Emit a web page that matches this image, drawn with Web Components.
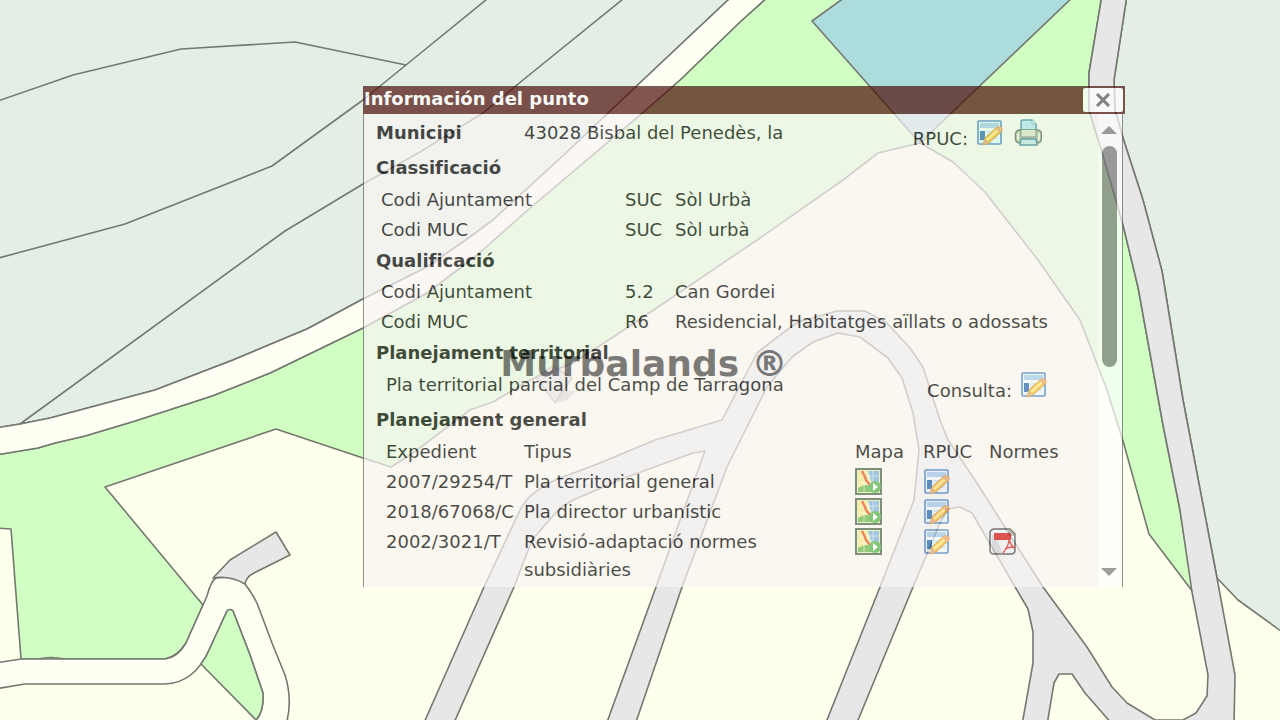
<!DOCTYPE html>
<html lang="ca">
<head>
<meta charset="utf-8">
<meta name="viewport" content="width=device-width, initial-scale=1">
<title>Información del punto</title>
<style>
  html, body { margin: 0; min-height: 100%; }
  body { font: 18px/28px "DejaVu Sans", Verdana, sans-serif; color: #000; background: #feffec; }
</style>
</head>
<body>
<map-page>
  <parcel-map slot="map"></parcel-map>
  <info-window heading="Información del punto">
    <place-row label="Municipi" value="43028 Bisbal del Penedès, la"></place-row>
    <section-title>Classificació</section-title>
    <code-row label="Codi Ajuntament" code="SUC" value="Sòl Urbà"></code-row>
    <code-row label="Codi MUC" code="SUC" value="Sòl urbà"></code-row>
    <section-title compact>Qualificació</section-title>
    <code-row label="Codi Ajuntament" code="5.2" value="Can Gordei"></code-row>
    <code-row label="Codi MUC" code="R6" value="Residencial, Habitatges aïllats o adossats"></code-row>
    <section-title compact>Planejament territorial</section-title>
    <plan-row value="Pla territorial parcial del Camp de Tarragona"></plan-row>
    <section-title>Planejament general</section-title>
    <plan-table></plan-table>
  </info-window>
  <water-mark slot="mark">Murbalands ®</water-mark>
</map-page>

<script>
function define(name, render) {
  customElements.define(name, class extends HTMLElement {
    connectedCallback() {
      if (this.shadowRoot) return;
      this.attachShadow({ mode: "open" }).innerHTML = render(this);
    }
  });
}

define("map-page", () => `
  <style>
    :host { display: grid; min-height: 100vh; overflow: hidden; }
    .map, .over, .mark { grid-area: 1 / 1; min-width: 0; }
    .map { display: grid; height: 100vh; }
    .over { display: grid; grid-template-columns: 363fr 762fr 155fr; align-items: start; padding-top: 86px; z-index: 1; }
    .over slot { display: block; grid-column: 2; min-width: 0; }
    .mark { display: grid; place-items: center; height: 100vh; z-index: 2; pointer-events: none; }
  </style>
  <div class="map"><slot name="map"></slot></div>
  <main class="over"><slot></slot></main>
  <div class="mark"><slot name="mark"></slot></div>`);

define("water-mark", () => `
  <style>:host { display: block; font-size: 36px; line-height: 40px; font-weight: bold; opacity: .5; white-space: nowrap; padding: 8px 0 0 8px; }</style>
  <slot></slot>`);

define("parcel-map", () => `
  <style>
    :host { display: block; width: 100%; height: 100%; min-height: 0; overflow: hidden; }
    svg { display: block; width: 100%; height: 100%; }
    .w { fill: #e3eee5; } .g { fill: #d1ffc3; } .c { fill: #feffec; } .r { fill: #fffff4; } .s { fill: #e7e7e7; } .p { fill: #acdcdc; }
  </style>
  <svg viewBox="0 0 1280 720" preserveAspectRatio="xMidYMid slice" stroke="#747870" stroke-width="1.6" stroke-linejoin="round" aria-hidden="true">
    <rect class="c" x="-5" y="-5" width="1290" height="730"/>
    <path class="g" d="M-5 455 38 448 55 443 85 436 135 421 212 396 270 373 363 328 427 293 477 255 530 208 640 115 680 80 740 22 770-5H1102L1089 73V110L1102 152 1123 225 1138 287 1163 425 1180 510 1193 592 1149 534 1123 441 1107 390 1080 320 1038 260 985 192 953 162 920 143 878 153 843 180 760 238 627 328 593 350 573 363 530 380 493 402 470 410 413 453 391 467 363 458 276 429 105 487 203 605 186 643Q177 657 165 659H65Q50 656 38 659H21L11 529-5 528Z"/>
    <path class="w" d="M-5-5H735L728 0 643 80 567 152 493 220 470 237 427 267 363 299 307 329 233 360 155 390 50 418 20 424-5 428Z"/>
    <path class="r" d="M-5 428 20 424 50 418 155 390 233 360 307 329 363 299 427 267 470 237 493 220 567 152 643 80 728 0 735-5H770L740 22 680 80 640 115 530 208 477 255 427 293 363 328 270 373 212 396 135 421 85 436 55 443 38 448-5 455Z"/>
    <path fill="none" d="M-5 102 73 75 181 49 295 42 406 65M492-5 406 65 363 100 272 166 125 224-5 259M628-5 523 80 483 113 420 152 363 184 285 231 20 424"/>
    <path class="p" d="M848-5 812 21 920 143 1075-5Z"/>
    <path class="w" d="M1127-5 1114 80 1115 110 1123 138 1143 200 1162 271 1183 400 1217 578 1238 600 1285 634V-5Z"/>
    <path class="r" d="M-5 663 21 659H165Q178 657 186 643L203 605 207 596Q211 581 216 578L230 577Q240 579 245 584 256 598 260 611L272 643 285 675Q293 700 286 725H252L256 720Q264 712 263 693L250 655 233 611Q230 608 227 611L210 648Q195 683 165 684H25L-5 689Z"/>
    <path class="g" d="M201 664 256 720Q264 712 263 693L250 655 233 611Q230 608 227 611L210 648Q207 656 201 664Z"/>
    <path class="s" d="M213 578 230 560 276 532 290 555 254 573Q246 577 245 584 230 575 213 578Z"/>
    <path class="s" d="M423 725 484 587 520 510Q531 489 563 477L600 463 655 440 722 420 757 353 780 335 798 322 837 311H865L887 323 910 348 923 367 940 420 948 440 975 480 1043 587 1087 647 1112 687 1127 703 1155 720H1183L1196 713 1207 696 1208 675 1192 592 1180 510 1163 425 1138 287 1123 225 1102 152 1089 110V73L1102-5H1127L1114 80 1115 110 1123 138 1143 200 1162 271 1183 400 1217 578 1235 675 1234 725H1113L1085 693 1072 674H1059L1054 683 1047 725H1022L1033 663V632L1028 609 972 513 960 507 948 509 940 523 913 587 856 725H825L880 587 914 500 919 450 913 413 902 378 888 358 860 337 838 333 813 342 792 357 767 387 727 467 682 587 635 725H606L656 587 705 451 693 453 627 477 573 500 560 508 532 540 514 587 453 725Z"/>
    <path d="M536 377 553 366 572 378 555 403Z" fill="#ccc" opacity=".7" stroke="#777"/>
    <path d="M555 403 561 390 576 391 566 401Z" fill="#999" stroke="none" opacity=".6"/>
  </svg>`);

define("info-window", el => `
  <style>
    :host { display: block; opacity: .7; }
    header { display: flex; justify-content: space-between; align-items: flex-start; height: 28px; padding: 0 2px 0 1px; background: #4e0f09; box-sizing: border-box; border-top: 1px solid #3f1616; }
    h2 { margin: 0; font-size: 18px; line-height: 24px; color: #fff; white-space: nowrap; }
    button { width: 40px; height: 24px; margin: 1px 0 0; padding: 0; border: 0; border-radius: 2px; background: #fff; display: grid; place-items: center; }
    .body { display: flex; margin-right: 2px; border: 1px solid #626262; border-width: 0 1px; background: #fff; }
    .content { flex: 1; min-width: 0; background: #f9f4f4; padding: 1px 0 2px; }
  </style>
  <header><h2>${el.getAttribute("heading")}</h2>
    <button type="button" aria-label="Cerrar"><svg width="16" height="14" viewBox="0 0 16 14"><path d="M2 1 14 13M14 1 2 13" stroke="#555" stroke-width="3"/></svg></button>
  </header>
  <div class="body"><div class="content"><slot></slot></div><scroll-rail></scroll-rail></div>`);

define("scroll-rail", () => `
  <style>
    :host { display: flex; flex-direction: column; align-items: center; width: 24px; box-sizing: border-box; padding: 12px 2px 11px 0; }
    i { border: 8px solid transparent; border-top: 0; border-bottom: 8px solid #777; }
    i:last-child { border-top: 8px solid #777; border-bottom: 0; margin-top: auto; }
    b { width: 15px; height: 49%; margin-top: 12px; border-radius: 8px; background: #777; }
  </style><i></i><b></b><i></i>`);

define("section-title", () => `
  <style>
    :host { display: block; padding-left: 12px; }
    h3 { margin: 0; font-size: 18px; line-height: 34px; color: #000; }
    :host([compact]) h3 { line-height: 32px; }
  </style><h3><slot></slot></h3>`);

define("place-row", el => `
  <style>
    :host { display: flex; height: 36px; line-height: 36px; padding: 0 56px 0 12px; white-space: nowrap; }
    b { flex: 0 0 148px; }
    .tools { display: flex; margin-left: auto; }
    .tools span { line-height: 48px; margin-right: 8px; }
    a { display: block; height: 28px; padding-top: 4px; }
    a + a { margin-left: 10px; }
  </style>
  <b>${el.getAttribute("label")}</b><span>${el.getAttribute("value")}</span>
  <div class="tools"><span>RPUC:</span><a href="#rpuc" aria-label="RPUC"><tool-icon name="form"></tool-icon></a><a href="#print" aria-label="Imprimir"><tool-icon name="print"></tool-icon></a></div>`);

define("code-row", el => `
  <style>
    :host { display: grid; grid-template-columns: 244px 50px 1fr; padding-left: 17px; line-height: 30px; white-space: nowrap; }
  </style>
  <span>${el.getAttribute("label")}</span><span>${el.getAttribute("code")}</span><span>${el.getAttribute("value")}</span>`);

define("plan-row", el => `
  <style>
    :host { display: flex; height: 34px; line-height: 32px; padding: 0 50px 0 22px; white-space: nowrap; }
    .tools { display: flex; margin-left: auto; }
    .tools span { line-height: 44px; margin-right: 8px; }
    a { display: block; height: 28px; padding-top: 2px; }
  </style>
  <span>${el.getAttribute("value")}</span>
  <div class="tools"><span>Consulta:</span><a href="#consulta" aria-label="Consulta"><tool-icon name="form"></tool-icon></a></div>`);

define("plan-table", () => {
  const rows = [
    ["2007/29254/T", "Pla territorial general"],
    ["2018/67068/C", "Pla director urbanístic"],
    ["2002/3021/T", "Revisió-adaptació normes subsidiàries", true]
  ];
  const link = (name, label) => `<a href="#${name}" aria-label="${label}"><tool-icon name="${name}"></tool-icon></a>`;
  return `
  <style>
    :host { display: block; padding-left: 22px; }
    table { width: 100%; table-layout: fixed; border-collapse: collapse; }
    th, td { padding: 1px 0; font-weight: normal; text-align: left; vertical-align: top; line-height: 28px; }
    td:first-child { white-space: nowrap; }
    a { display: block; height: 28px; }
    .id { width: 138px; } .map { width: 68px; } .rpuc { width: 66px; } .norm { width: 109px; }
  </style>
  <table>
    <thead><tr><th class="id">Expedient</th><th>Tipus</th><th class="map">Mapa</th><th class="rpuc">RPUC</th><th class="norm">Normes</th></tr></thead>
    <tbody>${rows.map(r => `<tr><td>${r[0]}</td><td>${r[1]}</td><td>${link("map", "Mapa")}</td><td>${link("form", "RPUC")}</td><td>${r[2] ? link("pdf", "Normes") : ""}</td></tr>`).join("")}</tbody>
  </table>`;
});

const icons = {
  form: `<rect x="2" y="2" width="23" height="23" rx="1" fill="#e9f3fb" stroke="#3f78c0" stroke-width="1.6"/>
    <rect x="4" y="4" width="19" height="5" fill="#a4c8eb"/><path d="M4 10.500H23" stroke="#fff" stroke-width="2"/>
    <rect x="4" y="12" width="5" height="9" fill="#2467ad"/><path d="M11 13H22M11 16H22M11 19H22" stroke="#c1d9ee" stroke-width="1.500"/>
    <path d="M7 26 9 19 21 8Q27 7 26 12L13 24Z" fill="#f0b428" stroke="#cf8b2c"/><path d="M11 21 22 11" stroke="#ffe07a" stroke-width="3"/><path d="m7 26 2-6 4 4Z" fill="#e0a070"/><path d="m21 8q6-1 5 4l-2 2-4-4Z" fill="#eaa060"/>`,
  print: `<path d="M7 12V3Q7 1 9 1H18L22 5V12Z" fill="#b8e0f5" stroke="#3f86ab" stroke-width="1.500"/>
    <path d="M18 1V5H22" fill="#fff" stroke="#6aa7c4"/>
    <rect x="1.500" y="11" width="26" height="13" rx="4" fill="#b2b8a9" stroke="#56645c" stroke-width="1.500"/>
    <path d="M7 11V18H22V11" fill="#dde0d2" stroke="#6b776e"/><path d="M4 14V21M25 14V21" stroke="#e9ebdf" stroke-width="2"/>
    <path d="M7 20H22L23 26H6Z" fill="#c7e2ee" stroke="#3c7a96" stroke-width="1.500"/>`,
  map: `<rect x="1" y="1" width="25" height="25" fill="#e3ecb7" stroke="#48604a" stroke-width="2"/>
    <path d="M13 3H24V15H17Z" fill="#7aaedd"/><path d="M3 3H12V16L3 20Z" fill="#f2e58c"/>
    <path d="M3 20Q11 15 15 18L24 15V24H3Z" fill="#66b34a"/><path d="M4 8H24M18 3V14M9 3V24M4 15H15" stroke="#fff" opacity=".55"/>
    <path d="m7 3 3 6 1 3 4 5" fill="none" stroke="#e7551f" stroke-width="2.500"/><circle cx="20" cy="19" r="6" fill="#4fae4b"/><path d="m18 15 5 4-5 4Z" fill="#fff"/>`,
  pdf: `<path d="M6 1H21L26 6V22Q26 26 22 26H5Q1 26 1 22V5Q1 1 6 1Z" fill="#f4f4f4" stroke="#444" stroke-width="1.500"/>
    <path d="M3 6Q10 12 13 25H6Q3 25 3 21Z" fill="#d5d5d5"/><rect x="5" y="5" width="17" height="7" fill="#d81610"/><path d="M20 2 25 7H22V5H20Z" fill="#fff" stroke="#777"/>
    <path d="M14 25Q19 19 20 13 20 11 21 14 22 18 26 20 21 18 16 21" fill="none" stroke="#df2a22" stroke-width="1.500"/>`
};
define("tool-icon", el => `
  <style>:host { display: block; width: 28px; height: 28px; } svg { display: block; }</style>
  <svg width="28" height="28" viewBox="0 0 28 28" aria-hidden="true">${icons[el.getAttribute("name")]}</svg>`);
</script>
</body>
</html>
